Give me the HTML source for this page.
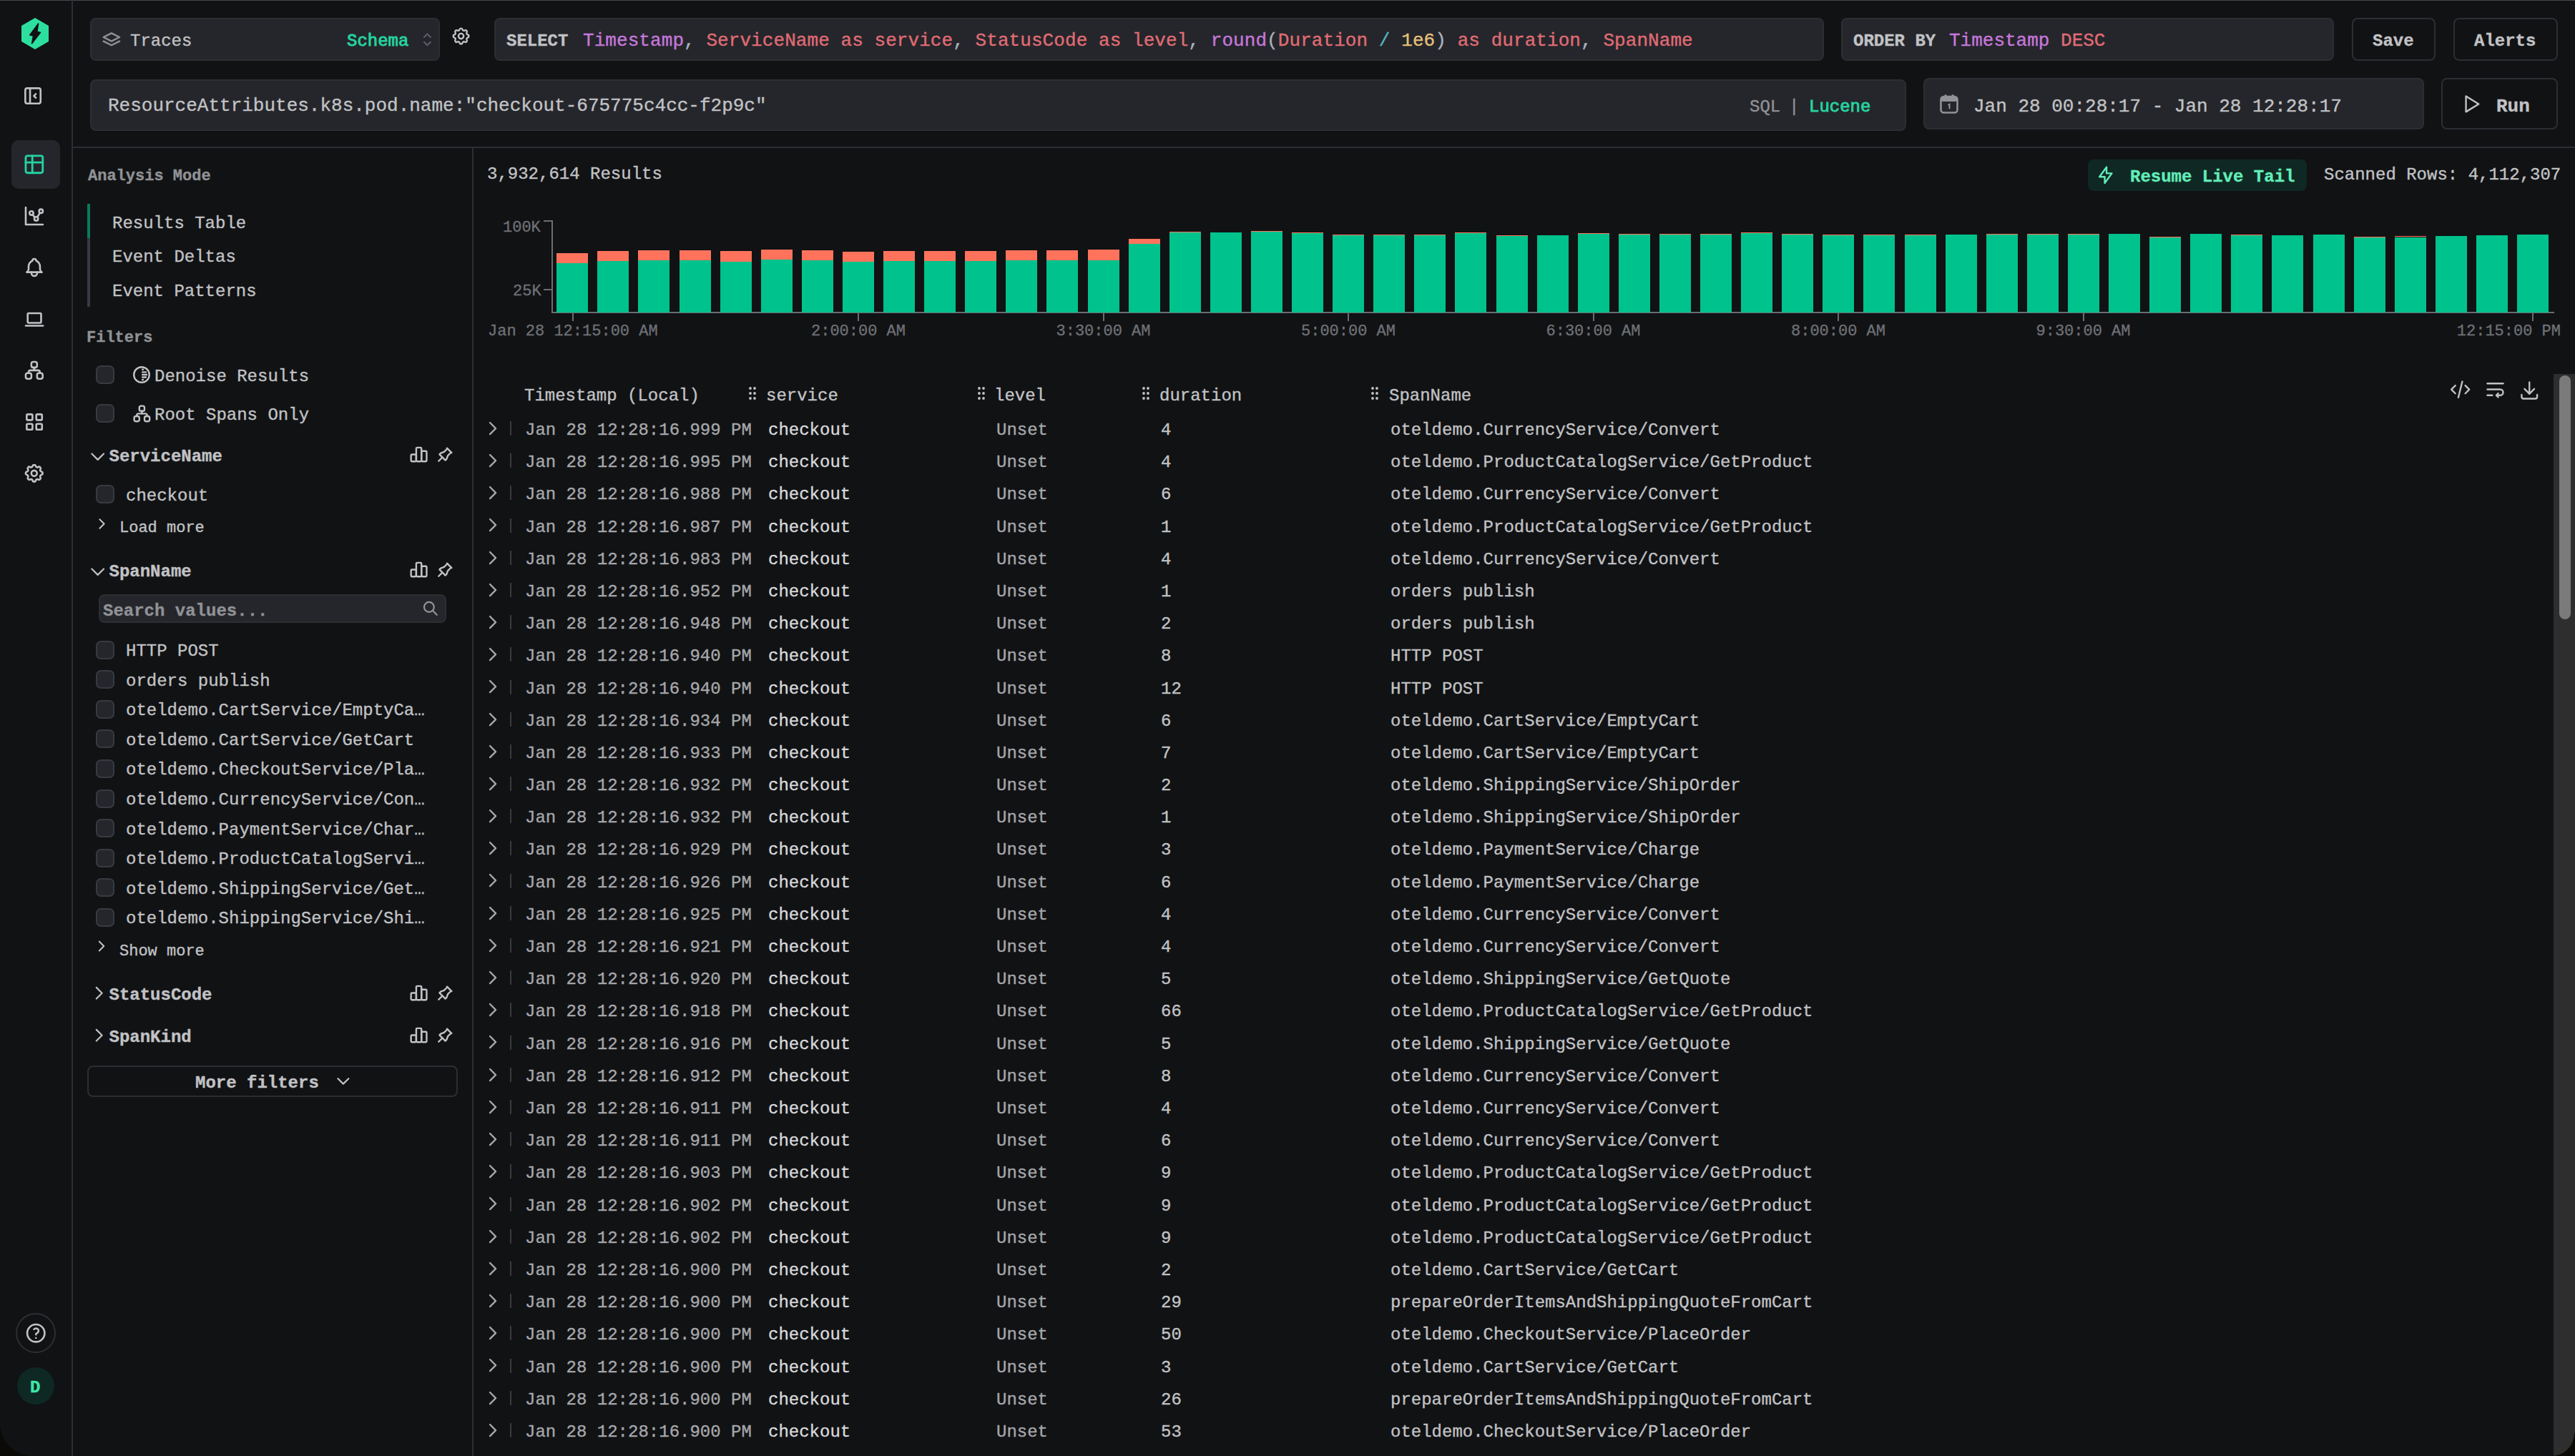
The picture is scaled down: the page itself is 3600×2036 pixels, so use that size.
<!DOCTYPE html>
<html><head><meta charset="utf-8"><title>HyperDX Search</title>
<style>
html,body{margin:0;padding:0;}
body{width:3600px;height:2036px;overflow:hidden;background:#111214;position:relative;font-family:'Liberation Mono', monospace;}
.t{position:absolute;white-space:pre;font-family:'Liberation Mono', monospace;-webkit-text-stroke:0.35px currentColor;}
.r{position:absolute;}
</style></head><body>
<div class="r" style="left:0px;top:0px;width:3600px;height:1px;background:#46464c;border-radius:0px;"></div><div class="r" style="left:100px;top:0px;width:2px;height:2036px;background:#2c2e33;border-radius:0px;"></div><svg class="r" style="left:29px;top:25px" width="40" height="44" viewBox="0 0 40 44"><path d="M20 0 L39 11 L39 33 L20 44 L1 33 L1 11 Z" fill="#2ddf9f"/><path d="M24.6 8 L12.8 24 L17.6 25 L15.6 35.8 L27.4 20.4 L22.8 19.2 Z" fill="#111214" stroke="#111214" stroke-width="1.6" stroke-linejoin="round"/></svg><svg class="r" style="left:29.95px;top:117.95px;" width="32.1" height="32.1" viewBox="0 0 24 24" fill="none" stroke="#c1c2c5" stroke-width="1.944" stroke-linecap="round" stroke-linejoin="round"><path d="M4 6a2 2 0 0 1 2 -2h12a2 2 0 0 1 2 2v12a2 2 0 0 1 -2 2h-12a2 2 0 0 1 -2 -2z"/><path d="M9 4v16"/><path d="M15 10l-2 2l2 2"/></svg><div class="r" style="left:16px;top:196px;width:68px;height:68px;background:#25262b;border-radius:10px;"></div><svg class="r" style="left:32.18px;top:213.98px;" width="31.73" height="31.73" viewBox="0 0 24 24" fill="none" stroke="#25d3a0" stroke-width="2.118" stroke-linecap="round" stroke-linejoin="round"><path d="M3 5a2 2 0 0 1 2 -2h14a2 2 0 0 1 2 2v14a2 2 0 0 1 -2 2h-14a2 2 0 0 1 -2 -2v-14z"/><path d="M3 10h18"/><path d="M10 3v18"/></svg><svg class="r" style="left:32.08px;top:286.03px;" width="31.93" height="31.93" viewBox="0 0 24 24" fill="none" stroke="#c1c2c5" stroke-width="1.954" stroke-linecap="round" stroke-linejoin="round"><path d="M3 3v18h18"/><circle cx="9" cy="9" r="2"/><circle cx="19" cy="7" r="2"/><circle cx="14" cy="15" r="2"/><path d="M10.16 10.62l2.34 2.88"/><path d="M15.088 13.328l2.837 -4.586"/></svg><svg class="r" style="left:32.04px;top:357.84px;" width="31.92" height="31.92" viewBox="0 0 24 24" fill="none" stroke="#c1c2c5" stroke-width="1.955" stroke-linecap="round" stroke-linejoin="round"><path d="M10 5a2 2 0 1 1 4 0a7 7 0 0 1 4 6v3a4 4 0 0 0 2 3h-16a4 4 0 0 0 2 -3v-3a7 7 0 0 1 4 -6"/><path d="M9 17v1a3 3 0 0 0 6 0v-1"/></svg><svg class="r" style="left:31.96px;top:430.14px;" width="32.18" height="32.18" viewBox="0 0 24 24" fill="none" stroke="#c1c2c5" stroke-width="1.939" stroke-linecap="round" stroke-linejoin="round"><path d="M3 19h18"/><path d="M5 7a1 1 0 0 1 1 -1h12a1 1 0 0 1 1 1v8a1 1 0 0 1 -1 1h-12a1 1 0 0 1 -1 -1z"/></svg><svg class="r" style="left:32.42px;top:502.07px;" width="31.67" height="31.67" viewBox="0 0 24 24" fill="none" stroke="#c1c2c5" stroke-width="1.971" stroke-linecap="round" stroke-linejoin="round"><path d="M3 17a2 2 0 0 1 2 -2h2a2 2 0 0 1 2 2v2a2 2 0 0 1 -2 2h-2a2 2 0 0 1 -2 -2z"/><path d="M15 17a2 2 0 0 1 2 -2h2a2 2 0 0 1 2 2v2a2 2 0 0 1 -2 2h-2a2 2 0 0 1 -2 -2z"/><path d="M9 5a2 2 0 0 1 2 -2h2a2 2 0 0 1 2 2v2a2 2 0 0 1 -2 2h-2a2 2 0 0 1 -2 -2z"/><path d="M6 15v-1a2 2 0 0 1 2 -2h8a2 2 0 0 1 2 2v1"/><path d="M12 9v3"/></svg><svg class="r" style="left:31.95px;top:573.95px;" width="32.1" height="32.1" viewBox="0 0 24 24" fill="none" stroke="#c1c2c5" stroke-width="1.944" stroke-linecap="round" stroke-linejoin="round"><path d="M4 5a1 1 0 0 1 1 -1h4a1 1 0 0 1 1 1v4a1 1 0 0 1 -1 1h-4a1 1 0 0 1 -1 -1z"/><path d="M14 5a1 1 0 0 1 1 -1h4a1 1 0 0 1 1 1v4a1 1 0 0 1 -1 1h-4a1 1 0 0 1 -1 -1z"/><path d="M4 15a1 1 0 0 1 1 -1h4a1 1 0 0 1 1 1v4a1 1 0 0 1 -1 1h-4a1 1 0 0 1 -1 -1z"/><path d="M14 15a1 1 0 0 1 1 -1h4a1 1 0 0 1 1 1v4a1 1 0 0 1 -1 1h-4a1 1 0 0 1 -1 -1z"/></svg><svg class="r" style="left:32.22px;top:646.22px;" width="31.55" height="31.55" viewBox="0 0 24 24" fill="none" stroke="#c1c2c5" stroke-width="1.978" stroke-linecap="round" stroke-linejoin="round"><path d="M10.325 4.317c.426 -1.756 2.924 -1.756 3.35 0a1.724 1.724 0 0 0 2.573 1.066c1.543 -.94 3.31 .826 2.37 2.37a1.724 1.724 0 0 0 1.065 2.572c1.756 .426 1.756 2.924 0 3.35a1.724 1.724 0 0 0 -1.066 2.573c.94 1.543 -.826 3.31 -2.37 2.37a1.724 1.724 0 0 0 -2.572 1.065c-.426 1.756 -2.924 1.756 -3.35 0a1.724 1.724 0 0 0 -2.573 -1.066c-1.543 .94 -3.31 -.826 -2.37 -2.37a1.724 1.724 0 0 0 -1.065 -2.572c-1.756 -.426 -1.756 -2.924 0 -3.35a1.724 1.724 0 0 0 1.066 -2.573c-.94 -1.543 .826 -3.31 2.37 -2.37c1 .608 2.296 .07 2.572 -1.065z"/><circle cx="12" cy="12" r="3"/></svg><div class="r" style="left:22px;top:1836px;width:56px;height:56px;background:none;border:2px solid #2c2e33;box-sizing:border-box;border-radius:28px;"></div><svg class="r" style="left:33.92px;top:1847.77px;" width="32.47" height="32.47" viewBox="0 0 24 24" fill="none" stroke="#c1c2c5" stroke-width="1.922" stroke-linecap="round" stroke-linejoin="round"><circle cx="12" cy="12" r="9"/><path d="M12 17v.01"/><path d="M12 13.5a1.5 1.5 0 0 1 1 -1.5a2.6 2.6 0 1 0 -3 -4"/></svg><div class="r" style="left:24px;top:1912px;width:52px;height:52px;background:#0e2823;border-radius:26px;"></div><div class="t" style="left:42px;top:1929px;font-size:24px;line-height:24px;color:#3ee6ab;font-weight:700;">D</div><div class="r" style="left:102px;top:205px;width:3498px;height:2px;background:#2c2e33;border-radius:0px;"></div><div class="r" style="left:126px;top:25px;width:489px;height:60px;background:#25262b;border:2px solid #2c2e33;box-sizing:border-box;border-radius:8px;"></div><svg class="r" style="left:139.11px;top:37.91px;" width="33.68" height="33.68" viewBox="0 0 24 24" fill="none" stroke="#909296" stroke-width="1.71" stroke-linecap="round" stroke-linejoin="round"><path d="M12 6l-8 4l8 4l8 -4l-8 -4"/><path d="M4 14l8 4l8 -4"/></svg><div class="t" style="left:182px;top:46px;font-size:24px;line-height:24px;color:#c1c2c5;">Traces</div><div class="t" style="left:485px;top:46px;font-size:24px;line-height:24px;color:#25d3a0;-webkit-text-stroke:0.9px currentColor;">Schema</div><svg class="r" style="left:584.11px;top:41.86px;" width="26.79" height="26.79" viewBox="0 0 24 24" fill="none" stroke="#5c5f66" stroke-width="1.792" stroke-linecap="round" stroke-linejoin="round"><path d="M8 9l4 -4l4 4"/><path d="M16 15l-4 4l-4 -4"/></svg><svg class="r" style="left:630.44px;top:36.44px;" width="29.13" height="29.13" viewBox="0 0 24 24" fill="none" stroke="#c1c2c5" stroke-width="1.978" stroke-linecap="round" stroke-linejoin="round"><path d="M10.325 4.317c.426 -1.756 2.924 -1.756 3.35 0a1.724 1.724 0 0 0 2.573 1.066c1.543 -.94 3.31 .826 2.37 2.37a1.724 1.724 0 0 0 1.065 2.572c1.756 .426 1.756 2.924 0 3.35a1.724 1.724 0 0 0 -1.066 2.573c.94 1.543 -.826 3.31 -2.37 2.37a1.724 1.724 0 0 0 -2.572 1.065c-.426 1.756 -2.924 1.756 -3.35 0a1.724 1.724 0 0 0 -2.573 -1.066c-1.543 .94 -3.31 -.826 -2.37 -2.37a1.724 1.724 0 0 0 -1.065 -2.572c-1.756 -.426 -1.756 -2.924 0 -3.35a1.724 1.724 0 0 0 1.066 -2.573c-.94 -1.543 .826 -3.31 2.37 -2.37c1 .608 2.296 .07 2.572 -1.065z"/><circle cx="12" cy="12" r="3"/></svg><div class="r" style="left:691px;top:25px;width:1859px;height:60px;background:#25262b;border:2px solid #2c2e33;box-sizing:border-box;border-radius:8px;"></div><div class="t" style="left:708px;top:46px;font-size:24px;line-height:24px;color:#c1c2c5;font-weight:700;">SELECT</div><div class="t" style="left:815px;top:44px;font-size:26px;line-height:26px;color:#c1c2c5;letter-spacing:0.07px;"><span style="color:#c678dd">Timestamp</span><span style="color:#abb2bf">, </span><span style="color:#e06c75">ServiceName as service</span><span style="color:#abb2bf">, </span><span style="color:#e06c75">StatusCode as level</span><span style="color:#abb2bf">, </span><span style="color:#c678dd">round</span><span style="color:#abb2bf">(</span><span style="color:#e06c75">Duration </span><span style="color:#56b6c2">/</span> <span style="color:#e5c07b">1e6</span><span style="color:#abb2bf">)</span> <span style="color:#e06c75">as duration</span><span style="color:#abb2bf">, </span><span style="color:#e06c75">SpanName</span></div><div class="r" style="left:2574px;top:25px;width:689px;height:60px;background:#25262b;border:2px solid #2c2e33;box-sizing:border-box;border-radius:8px;"></div><div class="t" style="left:2591px;top:46px;font-size:24px;line-height:24px;color:#c1c2c5;font-weight:700;">ORDER BY</div><div class="t" style="left:2725px;top:44px;font-size:26px;line-height:26px;color:#c1c2c5;"><span style="color:#c678dd">Timestamp</span> <span style="color:#e06c75">DESC</span></div><div class="r" style="left:3288px;top:25px;width:117px;height:60px;background:#111214;border:2px solid #2c2e33;box-sizing:border-box;border-radius:8px;"></div><div class="t" style="left:3317px;top:46px;font-size:24px;line-height:24px;color:#c1c2c5;font-weight:700;">Save</div><div class="r" style="left:3430px;top:25px;width:146px;height:60px;background:#111214;border:2px solid #2c2e33;box-sizing:border-box;border-radius:8px;"></div><div class="t" style="left:3459px;top:46px;font-size:24px;line-height:24px;color:#c1c2c5;font-weight:700;">Alerts</div><div class="r" style="left:126px;top:111px;width:2539px;height:72px;background:#25262b;border:2px solid #2c2e33;box-sizing:border-box;border-radius:8px;"></div><div class="t" style="left:151px;top:135px;font-size:26px;line-height:26px;color:#c1c2c5;">ResourceAttributes.k8s.pod.name:"checkout-675775c4cc-f2p9c"</div><div class="t" style="left:2446px;top:138px;font-size:24px;line-height:24px;color:#909296;">SQL</div><div class="t" style="left:2501px;top:138px;font-size:24px;line-height:24px;color:#909296;">|</div><div class="t" style="left:2529px;top:138px;font-size:24px;line-height:24px;color:#25d3a0;-webkit-text-stroke:0.9px currentColor;">Lucene</div><div class="r" style="left:2689px;top:109px;width:700px;height:72px;background:#25262b;border:2px solid #2c2e33;box-sizing:border-box;border-radius:8px;"></div><svg class="r" style="left:2712px;top:131px" width="26" height="28" viewBox="0 0 26 28"><rect x="1.5" y="4" width="23" height="22.5" rx="4" fill="none" stroke="#909296" stroke-width="2.6"/><rect x="1.5" y="4" width="23" height="7" rx="3" fill="#909296"/><rect x="6.5" y="1" width="3" height="5" rx="1.5" fill="#909296"/><rect x="16.5" y="1" width="3" height="5" rx="1.5" fill="#909296"/><path d="M11.5 16 l2 -1.2 v6.5" fill="none" stroke="#909296" stroke-width="2"/></svg><div class="t" style="left:2759px;top:136px;font-size:26px;line-height:26px;color:#c1c2c5;">Jan 28 00:28:17 - Jan 28 12:28:17</div><div class="r" style="left:3413px;top:109px;width:163px;height:72px;background:#111214;border:2px solid #2c2e33;box-sizing:border-box;border-radius:8px;"></div><svg class="r" style="left:3438.03px;top:128.63px;" width="32.84" height="32.84" viewBox="0 0 24 24" fill="none" stroke="#c1c2c5" stroke-width="1.754" stroke-linecap="round" stroke-linejoin="round"><path d="M7 4v16l13 -8z"/></svg><div class="t" style="left:3490px;top:136px;font-size:26px;line-height:26px;color:#c1c2c5;font-weight:700;">Run</div><div class="r" style="left:660px;top:207px;width:2px;height:1829px;background:#2c2e33;border-radius:0px;"></div><div class="t" style="left:123px;top:236px;font-size:22px;line-height:22px;color:#909296;font-weight:700;">Analysis Mode</div><div class="r" style="left:122px;top:285px;width:4px;height:48px;background:#0c7a5a;border-radius:0px;"></div><div class="r" style="left:122px;top:333px;width:4px;height:96px;background:#373a40;border-radius:0px;"></div><div class="t" style="left:157px;top:301px;font-size:24px;line-height:24px;color:#c1c2c5;">Results Table</div><div class="t" style="left:157px;top:348px;font-size:24px;line-height:24px;color:#c1c2c5;">Event Deltas</div><div class="t" style="left:157px;top:396px;font-size:24px;line-height:24px;color:#c1c2c5;">Event Patterns</div><div class="t" style="left:121px;top:462px;font-size:22px;line-height:22px;color:#909296;font-weight:700;">Filters</div><div class="r" style="left:134px;top:511px;width:26px;height:26px;background:#25262b;border:2px solid #373a40;box-sizing:border-box;border-radius:7px;"></div><svg class="r" style="left:185px;top:511px" width="26" height="26" viewBox="0 0 26 26"><circle cx="13" cy="13" r="10.8" fill="none" stroke="#c1c2c5" stroke-width="2.4"/><path d="M14.2 5.8h0.8 M14.2 9.4h4.8 M14.2 13h5.9 M14.2 16.5h4.8 M14.2 20h0.8" stroke="#c1c2c5" stroke-width="2.4" stroke-linecap="round"/></svg><div class="t" style="left:216px;top:515px;font-size:24px;line-height:24px;color:#c1c2c5;">Denoise Results</div><div class="r" style="left:134px;top:565px;width:26px;height:26px;background:#25262b;border:2px solid #373a40;box-sizing:border-box;border-radius:7px;"></div><svg class="r" style="left:183.6px;top:563.6px;" width="28.8" height="28.8" viewBox="0 0 24 24" fill="none" stroke="#c1c2c5" stroke-width="2.0" stroke-linecap="round" stroke-linejoin="round"><path d="M3 17a2 2 0 0 1 2 -2h2a2 2 0 0 1 2 2v2a2 2 0 0 1 -2 2h-2a2 2 0 0 1 -2 -2z"/><path d="M15 17a2 2 0 0 1 2 -2h2a2 2 0 0 1 2 2v2a2 2 0 0 1 -2 2h-2a2 2 0 0 1 -2 -2z"/><path d="M9 5a2 2 0 0 1 2 -2h2a2 2 0 0 1 2 2v2a2 2 0 0 1 -2 2h-2a2 2 0 0 1 -2 -2z"/><path d="M6 15v-1a2 2 0 0 1 2 -2h8a2 2 0 0 1 2 2v1"/><path d="M12 9v3"/></svg><div class="t" style="left:216px;top:569px;font-size:24px;line-height:24px;color:#c1c2c5;">Root Spans Only</div><svg class="r" style="left:120.3px;top:621.8px;" width="33.4" height="33.4" viewBox="0 0 24 24" fill="none" stroke="#c1c2c5" stroke-width="1.581" stroke-linecap="round" stroke-linejoin="round"><path d="M6 9l6 6l6 -6"/></svg><div class="t" style="left:152.5px;top:627px;font-size:24px;line-height:24px;color:#c1c2c5;font-weight:700;">ServiceName</div><svg class="r" style="left:571.45px;top:621.45px;" width="29.1" height="29.1" viewBox="0 0 24 24" fill="none" stroke="#c1c2c5" stroke-width="1.979" stroke-linecap="round" stroke-linejoin="round"><path d="M3 13a1 1 0 0 1 1 -1h4a1 1 0 0 1 1 1v6a1 1 0 0 1 -1 1h-4a1 1 0 0 1 -1 -1z"/><path d="M15 9a1 1 0 0 1 1 -1h4a1 1 0 0 1 1 1v10a1 1 0 0 1 -1 1h-4a1 1 0 0 1 -1 -1z"/><path d="M9 5a1 1 0 0 1 1 -1h4a1 1 0 0 1 1 1v14a1 1 0 0 1 -1 1h-4a1 1 0 0 1 -1 -1z"/></svg><svg class="r" style="left:607.7px;top:621.78px;" width="28.03" height="28.03" viewBox="0 0 24 24" fill="none" stroke="#c1c2c5" stroke-width="2.055" stroke-linecap="round" stroke-linejoin="round"><path d="M15 4.5l-4 4l-4 1.5l-1.5 1.5l7 7l1.5 -1.5l1.5 -4l4 -4"/><path d="M9 15l-4.5 4.5"/><path d="M14.5 4l5.5 5.5"/></svg><div class="r" style="left:134px;top:678px;width:26px;height:26px;background:#25262b;border:2px solid #373a40;box-sizing:border-box;border-radius:7px;"></div><div class="t" style="left:176px;top:682px;font-size:24px;line-height:24px;color:#c1c2c5;">checkout</div><svg class="r" style="left:130.0px;top:720.0px;" width="25.0" height="25.0" viewBox="0 0 24 24" fill="none" stroke="#c1c2c5" stroke-width="1.92" stroke-linecap="round" stroke-linejoin="round"><path d="M9 6l6 6l-6 6"/></svg><div class="t" style="left:167px;top:728px;font-size:22px;line-height:22px;color:#c1c2c5;">Load more</div><svg class="r" style="left:120.3px;top:782.8px;" width="33.4" height="33.4" viewBox="0 0 24 24" fill="none" stroke="#c1c2c5" stroke-width="1.581" stroke-linecap="round" stroke-linejoin="round"><path d="M6 9l6 6l6 -6"/></svg><div class="t" style="left:152.5px;top:788px;font-size:24px;line-height:24px;color:#c1c2c5;font-weight:700;">SpanName</div><svg class="r" style="left:571.45px;top:782.45px;" width="29.1" height="29.1" viewBox="0 0 24 24" fill="none" stroke="#c1c2c5" stroke-width="1.979" stroke-linecap="round" stroke-linejoin="round"><path d="M3 13a1 1 0 0 1 1 -1h4a1 1 0 0 1 1 1v6a1 1 0 0 1 -1 1h-4a1 1 0 0 1 -1 -1z"/><path d="M15 9a1 1 0 0 1 1 -1h4a1 1 0 0 1 1 1v10a1 1 0 0 1 -1 1h-4a1 1 0 0 1 -1 -1z"/><path d="M9 5a1 1 0 0 1 1 -1h4a1 1 0 0 1 1 1v14a1 1 0 0 1 -1 1h-4a1 1 0 0 1 -1 -1z"/></svg><svg class="r" style="left:607.7px;top:782.78px;" width="28.03" height="28.03" viewBox="0 0 24 24" fill="none" stroke="#c1c2c5" stroke-width="2.055" stroke-linecap="round" stroke-linejoin="round"><path d="M15 4.5l-4 4l-4 1.5l-1.5 1.5l7 7l1.5 -1.5l1.5 -4l4 -4"/><path d="M9 15l-4.5 4.5"/><path d="M14.5 4l5.5 5.5"/></svg><div class="r" style="left:138px;top:831px;width:486px;height:40px;background:#25262b;border:2px solid #2c2e33;box-sizing:border-box;border-radius:8px;"></div><div class="t" style="left:144px;top:843px;font-size:24px;line-height:24px;color:#909296;font-weight:700;">Search values...</div><svg class="r" style="left:590.13px;top:839.13px;" width="23.73" height="23.73" viewBox="0 0 24 24" fill="none" stroke="#909296" stroke-width="2.225" stroke-linecap="round" stroke-linejoin="round"><circle cx="10" cy="10" r="7"/><path d="M21 21l-6 -6"/></svg><div class="r" style="left:134px;top:895.6px;width:26px;height:26px;background:#25262b;border:2px solid #373a40;box-sizing:border-box;border-radius:7px;"></div><div class="t" style="left:176px;top:899.0px;font-size:24px;line-height:24px;color:#c1c2c5;">HTTP POST</div><div class="r" style="left:134px;top:937.2px;width:26px;height:26px;background:#25262b;border:2px solid #373a40;box-sizing:border-box;border-radius:7px;"></div><div class="t" style="left:176px;top:940.6px;font-size:24px;line-height:24px;color:#c1c2c5;">orders publish</div><div class="r" style="left:134px;top:978.8px;width:26px;height:26px;background:#25262b;border:2px solid #373a40;box-sizing:border-box;border-radius:7px;"></div><div class="t" style="left:176px;top:982.2px;font-size:24px;line-height:24px;color:#c1c2c5;">oteldemo.CartService/EmptyCa…</div><div class="r" style="left:134px;top:1020.4px;width:26px;height:26px;background:#25262b;border:2px solid #373a40;box-sizing:border-box;border-radius:7px;"></div><div class="t" style="left:176px;top:1023.8px;font-size:24px;line-height:24px;color:#c1c2c5;">oteldemo.CartService/GetCart</div><div class="r" style="left:134px;top:1062.0px;width:26px;height:26px;background:#25262b;border:2px solid #373a40;box-sizing:border-box;border-radius:7px;"></div><div class="t" style="left:176px;top:1065.4px;font-size:24px;line-height:24px;color:#c1c2c5;">oteldemo.CheckoutService/Pla…</div><div class="r" style="left:134px;top:1103.6px;width:26px;height:26px;background:#25262b;border:2px solid #373a40;box-sizing:border-box;border-radius:7px;"></div><div class="t" style="left:176px;top:1107.0px;font-size:24px;line-height:24px;color:#c1c2c5;">oteldemo.CurrencyService/Con…</div><div class="r" style="left:134px;top:1145.2px;width:26px;height:26px;background:#25262b;border:2px solid #373a40;box-sizing:border-box;border-radius:7px;"></div><div class="t" style="left:176px;top:1148.6px;font-size:24px;line-height:24px;color:#c1c2c5;">oteldemo.PaymentService/Char…</div><div class="r" style="left:134px;top:1186.8px;width:26px;height:26px;background:#25262b;border:2px solid #373a40;box-sizing:border-box;border-radius:7px;"></div><div class="t" style="left:176px;top:1190.2px;font-size:24px;line-height:24px;color:#c1c2c5;">oteldemo.ProductCatalogServi…</div><div class="r" style="left:134px;top:1228.4px;width:26px;height:26px;background:#25262b;border:2px solid #373a40;box-sizing:border-box;border-radius:7px;"></div><div class="t" style="left:176px;top:1231.8px;font-size:24px;line-height:24px;color:#c1c2c5;">oteldemo.ShippingService/Get…</div><div class="r" style="left:134px;top:1270.0px;width:26px;height:26px;background:#25262b;border:2px solid #373a40;box-sizing:border-box;border-radius:7px;"></div><div class="t" style="left:176px;top:1273.4px;font-size:24px;line-height:24px;color:#c1c2c5;">oteldemo.ShippingService/Shi…</div><svg class="r" style="left:128.5px;top:1310.0px;" width="26.0" height="26.0" viewBox="0 0 24 24" fill="none" stroke="#c1c2c5" stroke-width="1.846" stroke-linecap="round" stroke-linejoin="round"><path d="M9 6l6 6l-6 6"/></svg><div class="t" style="left:167px;top:1320px;font-size:22px;line-height:22px;color:#c1c2c5;">Show more</div><svg class="r" style="left:123.3px;top:1373.3px;" width="31.4" height="31.4" viewBox="0 0 24 24" fill="none" stroke="#c1c2c5" stroke-width="1.682" stroke-linecap="round" stroke-linejoin="round"><path d="M9 6l6 6l-6 6"/></svg><div class="t" style="left:152.5px;top:1380px;font-size:24px;line-height:24px;color:#c1c2c5;font-weight:700;">StatusCode</div><svg class="r" style="left:571.45px;top:1374.45px;" width="29.1" height="29.1" viewBox="0 0 24 24" fill="none" stroke="#c1c2c5" stroke-width="1.979" stroke-linecap="round" stroke-linejoin="round"><path d="M3 13a1 1 0 0 1 1 -1h4a1 1 0 0 1 1 1v6a1 1 0 0 1 -1 1h-4a1 1 0 0 1 -1 -1z"/><path d="M15 9a1 1 0 0 1 1 -1h4a1 1 0 0 1 1 1v10a1 1 0 0 1 -1 1h-4a1 1 0 0 1 -1 -1z"/><path d="M9 5a1 1 0 0 1 1 -1h4a1 1 0 0 1 1 1v14a1 1 0 0 1 -1 1h-4a1 1 0 0 1 -1 -1z"/></svg><svg class="r" style="left:607.7px;top:1374.78px;" width="28.03" height="28.03" viewBox="0 0 24 24" fill="none" stroke="#c1c2c5" stroke-width="2.055" stroke-linecap="round" stroke-linejoin="round"><path d="M15 4.5l-4 4l-4 1.5l-1.5 1.5l7 7l1.5 -1.5l1.5 -4l4 -4"/><path d="M9 15l-4.5 4.5"/><path d="M14.5 4l5.5 5.5"/></svg><svg class="r" style="left:123.3px;top:1432.3px;" width="31.4" height="31.4" viewBox="0 0 24 24" fill="none" stroke="#c1c2c5" stroke-width="1.682" stroke-linecap="round" stroke-linejoin="round"><path d="M9 6l6 6l-6 6"/></svg><div class="t" style="left:152.5px;top:1439px;font-size:24px;line-height:24px;color:#c1c2c5;font-weight:700;">SpanKind</div><svg class="r" style="left:571.45px;top:1433.45px;" width="29.1" height="29.1" viewBox="0 0 24 24" fill="none" stroke="#c1c2c5" stroke-width="1.979" stroke-linecap="round" stroke-linejoin="round"><path d="M3 13a1 1 0 0 1 1 -1h4a1 1 0 0 1 1 1v6a1 1 0 0 1 -1 1h-4a1 1 0 0 1 -1 -1z"/><path d="M15 9a1 1 0 0 1 1 -1h4a1 1 0 0 1 1 1v10a1 1 0 0 1 -1 1h-4a1 1 0 0 1 -1 -1z"/><path d="M9 5a1 1 0 0 1 1 -1h4a1 1 0 0 1 1 1v14a1 1 0 0 1 -1 1h-4a1 1 0 0 1 -1 -1z"/></svg><svg class="r" style="left:607.7px;top:1433.78px;" width="28.03" height="28.03" viewBox="0 0 24 24" fill="none" stroke="#c1c2c5" stroke-width="2.055" stroke-linecap="round" stroke-linejoin="round"><path d="M15 4.5l-4 4l-4 1.5l-1.5 1.5l7 7l1.5 -1.5l1.5 -4l4 -4"/><path d="M9 15l-4.5 4.5"/><path d="M14.5 4l5.5 5.5"/></svg><div class="r" style="left:122px;top:1490px;width:518px;height:44px;background:none;border:2px solid #2c2e33;box-sizing:border-box;border-radius:8px;"></div><div class="t" style="left:273px;top:1503px;font-size:24px;line-height:24px;color:#c1c2c5;font-weight:700;">More filters</div><svg class="r" style="left:464.9px;top:1497.1px;" width="29.8" height="29.8" viewBox="0 0 24 24" fill="none" stroke="#c1c2c5" stroke-width="1.772" stroke-linecap="round" stroke-linejoin="round"><path d="M6 9l6 6l6 -6"/></svg><div class="t" style="left:681px;top:232px;font-size:24px;line-height:24px;color:#c1c2c5;">3,932,614 Results</div><div class="r" style="left:2919px;top:223px;width:306px;height:44px;background:#0f2823;border-radius:8px;"></div><svg class="r" style="left:2928.93px;top:229.98px;" width="29.65" height="29.65" viewBox="0 0 24 24" fill="none" stroke="#62edba" stroke-width="1.943" stroke-linecap="round" stroke-linejoin="round"><path d="M13 3v7h6l-8 11v-7h-6l8 -11"/></svg><div class="t" style="left:2978px;top:236px;font-size:24px;line-height:24px;color:#62edba;font-weight:700;">Resume Live Tail</div><div class="t" style="left:3249px;top:233px;font-size:24px;line-height:24px;color:#c1c2c5;">Scanned Rows: 4,112,307</div><div class="t" style="left:703px;top:308px;font-size:22px;line-height:22px;color:#6e7075;">100K</div><div class="t" style="left:717px;top:397px;font-size:22px;line-height:22px;color:#6e7075;">25K</div><div class="r" style="left:771px;top:308px;width:2px;height:130px;background:#6b6d72;border-radius:0px;"></div><div class="r" style="left:760px;top:307.5px;width:12px;height:2px;background:#6b6d72;border-radius:0px;"></div><div class="r" style="left:760px;top:403.5px;width:12px;height:2px;background:#6b6d72;border-radius:0px;"></div><div class="r" style="left:771px;top:436px;width:2800px;height:2px;background:#6b6d72;border-radius:0px;"></div><div class="r" style="left:778.2px;top:353.8px;width:44px;height:14.2px;background:#ff735c;border-radius:0px;"></div><div class="r" style="left:778.2px;top:368px;width:44px;height:69px;background:#00c28c;border-radius:0px;"></div><div class="r" style="left:835.3px;top:350.8px;width:44px;height:14.2px;background:#ff735c;border-radius:0px;"></div><div class="r" style="left:835.3px;top:365px;width:44px;height:72px;background:#00c28c;border-radius:0px;"></div><div class="r" style="left:892.4px;top:349.7px;width:44px;height:14.2px;background:#ff735c;border-radius:0px;"></div><div class="r" style="left:892.4px;top:363.9px;width:44px;height:73.1px;background:#00c28c;border-radius:0px;"></div><div class="r" style="left:949.5px;top:349.7px;width:44px;height:14.2px;background:#ff735c;border-radius:0px;"></div><div class="r" style="left:949.5px;top:363.9px;width:44px;height:73.1px;background:#00c28c;border-radius:0px;"></div><div class="r" style="left:1006.6px;top:350.8px;width:44px;height:15.0px;background:#ff735c;border-radius:0px;"></div><div class="r" style="left:1006.6px;top:365.8px;width:44px;height:71.2px;background:#00c28c;border-radius:0px;"></div><div class="r" style="left:1063.7px;top:348.9px;width:44px;height:14.1px;background:#ff735c;border-radius:0px;"></div><div class="r" style="left:1063.7px;top:363px;width:44px;height:74px;background:#00c28c;border-radius:0px;"></div><div class="r" style="left:1120.8px;top:349.7px;width:44px;height:14.2px;background:#ff735c;border-radius:0px;"></div><div class="r" style="left:1120.8px;top:363.9px;width:44px;height:73.1px;background:#00c28c;border-radius:0px;"></div><div class="r" style="left:1177.9px;top:351.6px;width:44px;height:14.2px;background:#ff735c;border-radius:0px;"></div><div class="r" style="left:1177.9px;top:365.8px;width:44px;height:71.2px;background:#00c28c;border-radius:0px;"></div><div class="r" style="left:1235.0px;top:350.8px;width:44px;height:14.2px;background:#ff735c;border-radius:0px;"></div><div class="r" style="left:1235.0px;top:365px;width:44px;height:72px;background:#00c28c;border-radius:0px;"></div><div class="r" style="left:1292.1px;top:350.8px;width:44px;height:14.2px;background:#ff735c;border-radius:0px;"></div><div class="r" style="left:1292.1px;top:365px;width:44px;height:72px;background:#00c28c;border-radius:0px;"></div><div class="r" style="left:1349.2px;top:350.8px;width:44px;height:14.2px;background:#ff735c;border-radius:0px;"></div><div class="r" style="left:1349.2px;top:365px;width:44px;height:72px;background:#00c28c;border-radius:0px;"></div><div class="r" style="left:1406.3px;top:349.7px;width:44px;height:14.2px;background:#ff735c;border-radius:0px;"></div><div class="r" style="left:1406.3px;top:363.9px;width:44px;height:73.1px;background:#00c28c;border-radius:0px;"></div><div class="r" style="left:1463.4px;top:349.7px;width:44px;height:14.2px;background:#ff735c;border-radius:0px;"></div><div class="r" style="left:1463.4px;top:363.9px;width:44px;height:73.1px;background:#00c28c;border-radius:0px;"></div><div class="r" style="left:1520.5px;top:348.9px;width:44px;height:15.0px;background:#ff735c;border-radius:0px;"></div><div class="r" style="left:1520.5px;top:363.9px;width:44px;height:73.1px;background:#00c28c;border-radius:0px;"></div><div class="r" style="left:1577.6px;top:334px;width:44px;height:6.8px;background:#ff735c;border-radius:0px;"></div><div class="r" style="left:1577.6px;top:340.8px;width:44px;height:96.2px;background:#00c28c;border-radius:0px;"></div><div class="r" style="left:1634.7px;top:323.9px;width:44px;height:1.1px;background:#ff735c;border-radius:0px;"></div><div class="r" style="left:1634.7px;top:325px;width:44px;height:112px;background:#00c28c;border-radius:0px;"></div><div class="r" style="left:1691.8px;top:325px;width:44px;height:112px;background:#00c28c;border-radius:0px;"></div><div class="r" style="left:1748.9px;top:322.8px;width:44px;height:1.1px;background:#ff735c;border-radius:0px;"></div><div class="r" style="left:1748.9px;top:323.9px;width:44px;height:113.1px;background:#00c28c;border-radius:0px;"></div><div class="r" style="left:1806.0px;top:325px;width:44px;height:0.8px;background:#ff735c;border-radius:0px;"></div><div class="r" style="left:1806.0px;top:325.8px;width:44px;height:111.2px;background:#00c28c;border-radius:0px;"></div><div class="r" style="left:1863.1px;top:327.7px;width:44px;height:0.8px;background:#ff735c;border-radius:0px;"></div><div class="r" style="left:1863.1px;top:328.5px;width:44px;height:108.5px;background:#00c28c;border-radius:0px;"></div><div class="r" style="left:1920.2px;top:327.7px;width:44px;height:0.8px;background:#ff735c;border-radius:0px;"></div><div class="r" style="left:1920.2px;top:328.5px;width:44px;height:108.5px;background:#00c28c;border-radius:0px;"></div><div class="r" style="left:1977.3px;top:327.7px;width:44px;height:0.8px;background:#ff735c;border-radius:0px;"></div><div class="r" style="left:1977.3px;top:328.5px;width:44px;height:108.5px;background:#00c28c;border-radius:0px;"></div><div class="r" style="left:2034.4px;top:325px;width:44px;height:0.8px;background:#ff735c;border-radius:0px;"></div><div class="r" style="left:2034.4px;top:325.8px;width:44px;height:111.2px;background:#00c28c;border-radius:0px;"></div><div class="r" style="left:2091.5px;top:328.5px;width:44px;height:1.1px;background:#ff735c;border-radius:0px;"></div><div class="r" style="left:2091.5px;top:329.6px;width:44px;height:107.4px;background:#00c28c;border-radius:0px;"></div><div class="r" style="left:2148.6px;top:328.5px;width:44px;height:0.9px;background:#ff735c;border-radius:0px;"></div><div class="r" style="left:2148.6px;top:329.4px;width:44px;height:107.6px;background:#00c28c;border-radius:0px;"></div><div class="r" style="left:2205.7px;top:325.8px;width:44px;height:0.8px;background:#ff735c;border-radius:0px;"></div><div class="r" style="left:2205.7px;top:326.6px;width:44px;height:110.4px;background:#00c28c;border-radius:0px;"></div><div class="r" style="left:2262.8px;top:326.6px;width:44px;height:1.1px;background:#ff735c;border-radius:0px;"></div><div class="r" style="left:2262.8px;top:327.7px;width:44px;height:109.3px;background:#00c28c;border-radius:0px;"></div><div class="r" style="left:2319.9px;top:326.6px;width:44px;height:1.1px;background:#ff735c;border-radius:0px;"></div><div class="r" style="left:2319.9px;top:327.7px;width:44px;height:109.3px;background:#00c28c;border-radius:0px;"></div><div class="r" style="left:2377.0px;top:326.6px;width:44px;height:1.1px;background:#ff735c;border-radius:0px;"></div><div class="r" style="left:2377.0px;top:327.7px;width:44px;height:109.3px;background:#00c28c;border-radius:0px;"></div><div class="r" style="left:2434.1px;top:325px;width:44px;height:0.8px;background:#ff735c;border-radius:0px;"></div><div class="r" style="left:2434.1px;top:325.8px;width:44px;height:111.2px;background:#00c28c;border-radius:0px;"></div><div class="r" style="left:2491.2px;top:326.6px;width:44px;height:1.1px;background:#ff735c;border-radius:0px;"></div><div class="r" style="left:2491.2px;top:327.7px;width:44px;height:109.3px;background:#00c28c;border-radius:0px;"></div><div class="r" style="left:2548.3px;top:327.7px;width:44px;height:0.8px;background:#ff735c;border-radius:0px;"></div><div class="r" style="left:2548.3px;top:328.5px;width:44px;height:108.5px;background:#00c28c;border-radius:0px;"></div><div class="r" style="left:2605.4px;top:327.7px;width:44px;height:0.8px;background:#ff735c;border-radius:0px;"></div><div class="r" style="left:2605.4px;top:328.5px;width:44px;height:108.5px;background:#00c28c;border-radius:0px;"></div><div class="r" style="left:2662.5px;top:327.7px;width:44px;height:0.8px;background:#ff735c;border-radius:0px;"></div><div class="r" style="left:2662.5px;top:328.5px;width:44px;height:108.5px;background:#00c28c;border-radius:0px;"></div><div class="r" style="left:2719.6px;top:327.9px;width:44px;height:109.1px;background:#00c28c;border-radius:0px;"></div><div class="r" style="left:2776.7px;top:326.6px;width:44px;height:1.1px;background:#ff735c;border-radius:0px;"></div><div class="r" style="left:2776.7px;top:327.7px;width:44px;height:109.3px;background:#00c28c;border-radius:0px;"></div><div class="r" style="left:2833.8px;top:326.9px;width:44px;height:0.8px;background:#ff735c;border-radius:0px;"></div><div class="r" style="left:2833.8px;top:327.7px;width:44px;height:109.3px;background:#00c28c;border-radius:0px;"></div><div class="r" style="left:2890.9px;top:326.9px;width:44px;height:0.8px;background:#ff735c;border-radius:0px;"></div><div class="r" style="left:2890.9px;top:327.7px;width:44px;height:109.3px;background:#00c28c;border-radius:0px;"></div><div class="r" style="left:2948.0px;top:326.5px;width:44px;height:110.5px;background:#00c28c;border-radius:0px;"></div><div class="r" style="left:3005.1px;top:331px;width:44px;height:0.8px;background:#ff735c;border-radius:0px;"></div><div class="r" style="left:3005.1px;top:331.8px;width:44px;height:105.2px;background:#00c28c;border-radius:0px;"></div><div class="r" style="left:3062.2px;top:326.5px;width:44px;height:110.5px;background:#00c28c;border-radius:0px;"></div><div class="r" style="left:3119.3px;top:327.9px;width:44px;height:0.8px;background:#ff735c;border-radius:0px;"></div><div class="r" style="left:3119.3px;top:328.7px;width:44px;height:108.3px;background:#00c28c;border-radius:0px;"></div><div class="r" style="left:3176.4px;top:328.6px;width:44px;height:0.8px;background:#ff735c;border-radius:0px;"></div><div class="r" style="left:3176.4px;top:329.4px;width:44px;height:107.6px;background:#00c28c;border-radius:0px;"></div><div class="r" style="left:3233.5px;top:327.6px;width:44px;height:0.8px;background:#ff735c;border-radius:0px;"></div><div class="r" style="left:3233.5px;top:328.4px;width:44px;height:108.6px;background:#00c28c;border-radius:0px;"></div><div class="r" style="left:3290.6px;top:330.7px;width:44px;height:0.8px;background:#ff735c;border-radius:0px;"></div><div class="r" style="left:3290.6px;top:331.5px;width:44px;height:105.5px;background:#00c28c;border-radius:0px;"></div><div class="r" style="left:3347.7px;top:329.7px;width:44px;height:1.8px;background:#ff735c;border-radius:0px;"></div><div class="r" style="left:3347.7px;top:331.5px;width:44px;height:105.5px;background:#00c28c;border-radius:0px;"></div><div class="r" style="left:3404.8px;top:329.7px;width:44px;height:107.3px;background:#00c28c;border-radius:0px;"></div><div class="r" style="left:3461.9px;top:328.6px;width:44px;height:108.4px;background:#00c28c;border-radius:0px;"></div><div class="r" style="left:3519.0px;top:327.6px;width:44px;height:0.8px;background:#ff735c;border-radius:0px;"></div><div class="r" style="left:3519.0px;top:328.4px;width:44px;height:108.6px;background:#00c28c;border-radius:0px;"></div><div class="r" style="left:799.5px;top:438px;width:2px;height:11px;background:#6b6d72;border-radius:0px;"></div><div class="t" style="left:682px;top:453px;font-size:22px;line-height:22px;color:#6e7075;">Jan 28 12:15:00 AM</div><div class="r" style="left:1199px;top:438px;width:2px;height:11px;background:#6b6d72;border-radius:0px;"></div><div class="t" style="left:1134.0px;top:453px;font-size:22px;line-height:22px;color:#6e7075;">2:00:00 AM</div><div class="r" style="left:1541.5px;top:438px;width:2px;height:11px;background:#6b6d72;border-radius:0px;"></div><div class="t" style="left:1476.5px;top:453px;font-size:22px;line-height:22px;color:#6e7075;">3:30:00 AM</div><div class="r" style="left:1884px;top:438px;width:2px;height:11px;background:#6b6d72;border-radius:0px;"></div><div class="t" style="left:1819.0px;top:453px;font-size:22px;line-height:22px;color:#6e7075;">5:00:00 AM</div><div class="r" style="left:2226.5px;top:438px;width:2px;height:11px;background:#6b6d72;border-radius:0px;"></div><div class="t" style="left:2161.5px;top:453px;font-size:22px;line-height:22px;color:#6e7075;">6:30:00 AM</div><div class="r" style="left:2569px;top:438px;width:2px;height:11px;background:#6b6d72;border-radius:0px;"></div><div class="t" style="left:2504.0px;top:453px;font-size:22px;line-height:22px;color:#6e7075;">8:00:00 AM</div><div class="r" style="left:2911.5px;top:438px;width:2px;height:11px;background:#6b6d72;border-radius:0px;"></div><div class="t" style="left:2846.5px;top:453px;font-size:22px;line-height:22px;color:#6e7075;">9:30:00 AM</div><div class="r" style="left:3540px;top:438px;width:2px;height:11px;background:#6b6d72;border-radius:0px;"></div><div class="t" style="left:3434.8px;top:453px;font-size:22px;line-height:22px;color:#6e7075;">12:15:00 PM</div><div class="t" style="left:733px;top:542px;font-size:24px;line-height:24px;color:#c1c2c5;">Timestamp (Local)</div><svg class="r" style="left:1047px;top:541px" width="10" height="18" viewBox="0 0 10 18" fill="#c1c2c5"><circle cx="2" cy="2" r="1.9"/><circle cx="2" cy="9" r="1.9"/><circle cx="2" cy="16" r="1.9"/><circle cx="8" cy="2" r="1.9"/><circle cx="8" cy="9" r="1.9"/><circle cx="8" cy="16" r="1.9"/></svg><div class="t" style="left:1071px;top:542px;font-size:24px;line-height:24px;color:#c1c2c5;">service</div><svg class="r" style="left:1367px;top:541px" width="10" height="18" viewBox="0 0 10 18" fill="#c1c2c5"><circle cx="2" cy="2" r="1.9"/><circle cx="2" cy="9" r="1.9"/><circle cx="2" cy="16" r="1.9"/><circle cx="8" cy="2" r="1.9"/><circle cx="8" cy="9" r="1.9"/><circle cx="8" cy="16" r="1.9"/></svg><div class="t" style="left:1390px;top:542px;font-size:24px;line-height:24px;color:#c1c2c5;">level</div><svg class="r" style="left:1597px;top:541px" width="10" height="18" viewBox="0 0 10 18" fill="#c1c2c5"><circle cx="2" cy="2" r="1.9"/><circle cx="2" cy="9" r="1.9"/><circle cx="2" cy="16" r="1.9"/><circle cx="8" cy="2" r="1.9"/><circle cx="8" cy="9" r="1.9"/><circle cx="8" cy="16" r="1.9"/></svg><div class="t" style="left:1621px;top:542px;font-size:24px;line-height:24px;color:#c1c2c5;">duration</div><svg class="r" style="left:1917px;top:541px" width="10" height="18" viewBox="0 0 10 18" fill="#c1c2c5"><circle cx="2" cy="2" r="1.9"/><circle cx="2" cy="9" r="1.9"/><circle cx="2" cy="16" r="1.9"/><circle cx="8" cy="2" r="1.9"/><circle cx="8" cy="9" r="1.9"/><circle cx="8" cy="16" r="1.9"/></svg><div class="t" style="left:1942px;top:542px;font-size:24px;line-height:24px;color:#c1c2c5;">SpanName</div><svg class="r" style="left:3422.82px;top:527.83px;" width="33.35" height="33.35" viewBox="0 0 24 24" fill="none" stroke="#c1c2c5" stroke-width="1.727" stroke-linecap="round" stroke-linejoin="round"><path d="M7 8l-4 4l4 4"/><path d="M17 8l4 4l-4 4"/><path d="M14 4l-4 16"/></svg><svg class="r" style="left:3471.5px;top:528.12px;" width="33.0" height="33.0" viewBox="0 0 24 24" fill="none" stroke="#c1c2c5" stroke-width="1.745" stroke-linecap="round" stroke-linejoin="round"><path d="M4 6h16"/><path d="M4 18h5"/><path d="M4 12h13a3 3 0 0 1 0 6h-4l2 -2m0 4l-2 -2"/></svg><svg class="r" style="left:3519.75px;top:529.32px;" width="32.51" height="32.51" viewBox="0 0 24 24" fill="none" stroke="#c1c2c5" stroke-width="1.772" stroke-linecap="round" stroke-linejoin="round"><path d="M4 17v2a2 2 0 0 0 2 2h12a2 2 0 0 0 2 -2v-2"/><path d="M7 11l5 5l5 -5"/><path d="M12 4v12"/></svg><div class="r" style="left:3570px;top:523px;width:30px;height:1513px;background:#2e2e2e;border-radius:0px;"></div><div class="r" style="left:3578px;top:525px;width:16px;height:341px;background:#7a7a7a;border-radius:8px;"></div><svg class="r" style="left:672.8px;top:582.8px;" width="32.1" height="32.1" viewBox="0 0 24 24" fill="none" stroke="#a6a7ab" stroke-width="1.794" stroke-linecap="round" stroke-linejoin="round"><path d="M9 6l6 6l-6 6"/></svg><div class="r" style="left:713px;top:589.0px;width:2px;height:20px;background:#373a40;border-radius:0px;"></div><div class="t" style="left:734px;top:590.0px;font-size:24px;line-height:24px;color:#a6a7ab;">Jan 28 12:28:16.999 PM</div><div class="t" style="left:1074px;top:590.0px;font-size:24px;line-height:24px;color:#d8d9dc;">checkout</div><div class="t" style="left:1393px;top:590.0px;font-size:24px;line-height:24px;color:#a6a7ab;">Unset</div><div class="t" style="left:1623px;top:590.0px;font-size:24px;line-height:24px;color:#c1c2c5;">4</div><div class="t" style="left:1944px;top:590.0px;font-size:24px;line-height:24px;color:#c1c2c5;">oteldemo.CurrencyService/Convert</div><svg class="r" style="left:672.8px;top:627.99px;" width="32.1" height="32.1" viewBox="0 0 24 24" fill="none" stroke="#a6a7ab" stroke-width="1.794" stroke-linecap="round" stroke-linejoin="round"><path d="M9 6l6 6l-6 6"/></svg><div class="r" style="left:713px;top:634.19px;width:2px;height:20px;background:#373a40;border-radius:0px;"></div><div class="t" style="left:734px;top:635.19px;font-size:24px;line-height:24px;color:#a6a7ab;">Jan 28 12:28:16.995 PM</div><div class="t" style="left:1074px;top:635.19px;font-size:24px;line-height:24px;color:#d8d9dc;">checkout</div><div class="t" style="left:1393px;top:635.19px;font-size:24px;line-height:24px;color:#a6a7ab;">Unset</div><div class="t" style="left:1623px;top:635.19px;font-size:24px;line-height:24px;color:#c1c2c5;">4</div><div class="t" style="left:1944px;top:635.19px;font-size:24px;line-height:24px;color:#c1c2c5;">oteldemo.ProductCatalogService/GetProduct</div><svg class="r" style="left:672.8px;top:673.18px;" width="32.1" height="32.1" viewBox="0 0 24 24" fill="none" stroke="#a6a7ab" stroke-width="1.794" stroke-linecap="round" stroke-linejoin="round"><path d="M9 6l6 6l-6 6"/></svg><div class="r" style="left:713px;top:679.38px;width:2px;height:20px;background:#373a40;border-radius:0px;"></div><div class="t" style="left:734px;top:680.38px;font-size:24px;line-height:24px;color:#a6a7ab;">Jan 28 12:28:16.988 PM</div><div class="t" style="left:1074px;top:680.38px;font-size:24px;line-height:24px;color:#d8d9dc;">checkout</div><div class="t" style="left:1393px;top:680.38px;font-size:24px;line-height:24px;color:#a6a7ab;">Unset</div><div class="t" style="left:1623px;top:680.38px;font-size:24px;line-height:24px;color:#c1c2c5;">6</div><div class="t" style="left:1944px;top:680.38px;font-size:24px;line-height:24px;color:#c1c2c5;">oteldemo.CurrencyService/Convert</div><svg class="r" style="left:672.8px;top:718.37px;" width="32.1" height="32.1" viewBox="0 0 24 24" fill="none" stroke="#a6a7ab" stroke-width="1.794" stroke-linecap="round" stroke-linejoin="round"><path d="M9 6l6 6l-6 6"/></svg><div class="r" style="left:713px;top:724.57px;width:2px;height:20px;background:#373a40;border-radius:0px;"></div><div class="t" style="left:734px;top:725.57px;font-size:24px;line-height:24px;color:#a6a7ab;">Jan 28 12:28:16.987 PM</div><div class="t" style="left:1074px;top:725.57px;font-size:24px;line-height:24px;color:#d8d9dc;">checkout</div><div class="t" style="left:1393px;top:725.57px;font-size:24px;line-height:24px;color:#a6a7ab;">Unset</div><div class="t" style="left:1623px;top:725.57px;font-size:24px;line-height:24px;color:#c1c2c5;">1</div><div class="t" style="left:1944px;top:725.57px;font-size:24px;line-height:24px;color:#c1c2c5;">oteldemo.ProductCatalogService/GetProduct</div><svg class="r" style="left:672.8px;top:763.56px;" width="32.1" height="32.1" viewBox="0 0 24 24" fill="none" stroke="#a6a7ab" stroke-width="1.794" stroke-linecap="round" stroke-linejoin="round"><path d="M9 6l6 6l-6 6"/></svg><div class="r" style="left:713px;top:769.76px;width:2px;height:20px;background:#373a40;border-radius:0px;"></div><div class="t" style="left:734px;top:770.76px;font-size:24px;line-height:24px;color:#a6a7ab;">Jan 28 12:28:16.983 PM</div><div class="t" style="left:1074px;top:770.76px;font-size:24px;line-height:24px;color:#d8d9dc;">checkout</div><div class="t" style="left:1393px;top:770.76px;font-size:24px;line-height:24px;color:#a6a7ab;">Unset</div><div class="t" style="left:1623px;top:770.76px;font-size:24px;line-height:24px;color:#c1c2c5;">4</div><div class="t" style="left:1944px;top:770.76px;font-size:24px;line-height:24px;color:#c1c2c5;">oteldemo.CurrencyService/Convert</div><svg class="r" style="left:672.8px;top:808.75px;" width="32.1" height="32.1" viewBox="0 0 24 24" fill="none" stroke="#a6a7ab" stroke-width="1.794" stroke-linecap="round" stroke-linejoin="round"><path d="M9 6l6 6l-6 6"/></svg><div class="r" style="left:713px;top:814.95px;width:2px;height:20px;background:#373a40;border-radius:0px;"></div><div class="t" style="left:734px;top:815.95px;font-size:24px;line-height:24px;color:#a6a7ab;">Jan 28 12:28:16.952 PM</div><div class="t" style="left:1074px;top:815.95px;font-size:24px;line-height:24px;color:#d8d9dc;">checkout</div><div class="t" style="left:1393px;top:815.95px;font-size:24px;line-height:24px;color:#a6a7ab;">Unset</div><div class="t" style="left:1623px;top:815.95px;font-size:24px;line-height:24px;color:#c1c2c5;">1</div><div class="t" style="left:1944px;top:815.95px;font-size:24px;line-height:24px;color:#c1c2c5;">orders publish</div><svg class="r" style="left:672.8px;top:853.94px;" width="32.1" height="32.1" viewBox="0 0 24 24" fill="none" stroke="#a6a7ab" stroke-width="1.794" stroke-linecap="round" stroke-linejoin="round"><path d="M9 6l6 6l-6 6"/></svg><div class="r" style="left:713px;top:860.14px;width:2px;height:20px;background:#373a40;border-radius:0px;"></div><div class="t" style="left:734px;top:861.14px;font-size:24px;line-height:24px;color:#a6a7ab;">Jan 28 12:28:16.948 PM</div><div class="t" style="left:1074px;top:861.14px;font-size:24px;line-height:24px;color:#d8d9dc;">checkout</div><div class="t" style="left:1393px;top:861.14px;font-size:24px;line-height:24px;color:#a6a7ab;">Unset</div><div class="t" style="left:1623px;top:861.14px;font-size:24px;line-height:24px;color:#c1c2c5;">2</div><div class="t" style="left:1944px;top:861.14px;font-size:24px;line-height:24px;color:#c1c2c5;">orders publish</div><svg class="r" style="left:672.8px;top:899.13px;" width="32.1" height="32.1" viewBox="0 0 24 24" fill="none" stroke="#a6a7ab" stroke-width="1.794" stroke-linecap="round" stroke-linejoin="round"><path d="M9 6l6 6l-6 6"/></svg><div class="r" style="left:713px;top:905.33px;width:2px;height:20px;background:#373a40;border-radius:0px;"></div><div class="t" style="left:734px;top:906.33px;font-size:24px;line-height:24px;color:#a6a7ab;">Jan 28 12:28:16.940 PM</div><div class="t" style="left:1074px;top:906.33px;font-size:24px;line-height:24px;color:#d8d9dc;">checkout</div><div class="t" style="left:1393px;top:906.33px;font-size:24px;line-height:24px;color:#a6a7ab;">Unset</div><div class="t" style="left:1623px;top:906.33px;font-size:24px;line-height:24px;color:#c1c2c5;">8</div><div class="t" style="left:1944px;top:906.33px;font-size:24px;line-height:24px;color:#c1c2c5;">HTTP POST</div><svg class="r" style="left:672.8px;top:944.32px;" width="32.1" height="32.1" viewBox="0 0 24 24" fill="none" stroke="#a6a7ab" stroke-width="1.794" stroke-linecap="round" stroke-linejoin="round"><path d="M9 6l6 6l-6 6"/></svg><div class="r" style="left:713px;top:950.52px;width:2px;height:20px;background:#373a40;border-radius:0px;"></div><div class="t" style="left:734px;top:951.52px;font-size:24px;line-height:24px;color:#a6a7ab;">Jan 28 12:28:16.940 PM</div><div class="t" style="left:1074px;top:951.52px;font-size:24px;line-height:24px;color:#d8d9dc;">checkout</div><div class="t" style="left:1393px;top:951.52px;font-size:24px;line-height:24px;color:#a6a7ab;">Unset</div><div class="t" style="left:1623px;top:951.52px;font-size:24px;line-height:24px;color:#c1c2c5;">12</div><div class="t" style="left:1944px;top:951.52px;font-size:24px;line-height:24px;color:#c1c2c5;">HTTP POST</div><svg class="r" style="left:672.8px;top:989.51px;" width="32.1" height="32.1" viewBox="0 0 24 24" fill="none" stroke="#a6a7ab" stroke-width="1.794" stroke-linecap="round" stroke-linejoin="round"><path d="M9 6l6 6l-6 6"/></svg><div class="r" style="left:713px;top:995.71px;width:2px;height:20px;background:#373a40;border-radius:0px;"></div><div class="t" style="left:734px;top:996.71px;font-size:24px;line-height:24px;color:#a6a7ab;">Jan 28 12:28:16.934 PM</div><div class="t" style="left:1074px;top:996.71px;font-size:24px;line-height:24px;color:#d8d9dc;">checkout</div><div class="t" style="left:1393px;top:996.71px;font-size:24px;line-height:24px;color:#a6a7ab;">Unset</div><div class="t" style="left:1623px;top:996.71px;font-size:24px;line-height:24px;color:#c1c2c5;">6</div><div class="t" style="left:1944px;top:996.71px;font-size:24px;line-height:24px;color:#c1c2c5;">oteldemo.CartService/EmptyCart</div><svg class="r" style="left:672.8px;top:1034.7px;" width="32.1" height="32.1" viewBox="0 0 24 24" fill="none" stroke="#a6a7ab" stroke-width="1.794" stroke-linecap="round" stroke-linejoin="round"><path d="M9 6l6 6l-6 6"/></svg><div class="r" style="left:713px;top:1040.9px;width:2px;height:20px;background:#373a40;border-radius:0px;"></div><div class="t" style="left:734px;top:1041.9px;font-size:24px;line-height:24px;color:#a6a7ab;">Jan 28 12:28:16.933 PM</div><div class="t" style="left:1074px;top:1041.9px;font-size:24px;line-height:24px;color:#d8d9dc;">checkout</div><div class="t" style="left:1393px;top:1041.9px;font-size:24px;line-height:24px;color:#a6a7ab;">Unset</div><div class="t" style="left:1623px;top:1041.9px;font-size:24px;line-height:24px;color:#c1c2c5;">7</div><div class="t" style="left:1944px;top:1041.9px;font-size:24px;line-height:24px;color:#c1c2c5;">oteldemo.CartService/EmptyCart</div><svg class="r" style="left:672.8px;top:1079.89px;" width="32.1" height="32.1" viewBox="0 0 24 24" fill="none" stroke="#a6a7ab" stroke-width="1.794" stroke-linecap="round" stroke-linejoin="round"><path d="M9 6l6 6l-6 6"/></svg><div class="r" style="left:713px;top:1086.09px;width:2px;height:20px;background:#373a40;border-radius:0px;"></div><div class="t" style="left:734px;top:1087.09px;font-size:24px;line-height:24px;color:#a6a7ab;">Jan 28 12:28:16.932 PM</div><div class="t" style="left:1074px;top:1087.09px;font-size:24px;line-height:24px;color:#d8d9dc;">checkout</div><div class="t" style="left:1393px;top:1087.09px;font-size:24px;line-height:24px;color:#a6a7ab;">Unset</div><div class="t" style="left:1623px;top:1087.09px;font-size:24px;line-height:24px;color:#c1c2c5;">2</div><div class="t" style="left:1944px;top:1087.09px;font-size:24px;line-height:24px;color:#c1c2c5;">oteldemo.ShippingService/ShipOrder</div><svg class="r" style="left:672.8px;top:1125.08px;" width="32.1" height="32.1" viewBox="0 0 24 24" fill="none" stroke="#a6a7ab" stroke-width="1.794" stroke-linecap="round" stroke-linejoin="round"><path d="M9 6l6 6l-6 6"/></svg><div class="r" style="left:713px;top:1131.28px;width:2px;height:20px;background:#373a40;border-radius:0px;"></div><div class="t" style="left:734px;top:1132.28px;font-size:24px;line-height:24px;color:#a6a7ab;">Jan 28 12:28:16.932 PM</div><div class="t" style="left:1074px;top:1132.28px;font-size:24px;line-height:24px;color:#d8d9dc;">checkout</div><div class="t" style="left:1393px;top:1132.28px;font-size:24px;line-height:24px;color:#a6a7ab;">Unset</div><div class="t" style="left:1623px;top:1132.28px;font-size:24px;line-height:24px;color:#c1c2c5;">1</div><div class="t" style="left:1944px;top:1132.28px;font-size:24px;line-height:24px;color:#c1c2c5;">oteldemo.ShippingService/ShipOrder</div><svg class="r" style="left:672.8px;top:1170.27px;" width="32.1" height="32.1" viewBox="0 0 24 24" fill="none" stroke="#a6a7ab" stroke-width="1.794" stroke-linecap="round" stroke-linejoin="round"><path d="M9 6l6 6l-6 6"/></svg><div class="r" style="left:713px;top:1176.47px;width:2px;height:20px;background:#373a40;border-radius:0px;"></div><div class="t" style="left:734px;top:1177.47px;font-size:24px;line-height:24px;color:#a6a7ab;">Jan 28 12:28:16.929 PM</div><div class="t" style="left:1074px;top:1177.47px;font-size:24px;line-height:24px;color:#d8d9dc;">checkout</div><div class="t" style="left:1393px;top:1177.47px;font-size:24px;line-height:24px;color:#a6a7ab;">Unset</div><div class="t" style="left:1623px;top:1177.47px;font-size:24px;line-height:24px;color:#c1c2c5;">3</div><div class="t" style="left:1944px;top:1177.47px;font-size:24px;line-height:24px;color:#c1c2c5;">oteldemo.PaymentService/Charge</div><svg class="r" style="left:672.8px;top:1215.46px;" width="32.1" height="32.1" viewBox="0 0 24 24" fill="none" stroke="#a6a7ab" stroke-width="1.794" stroke-linecap="round" stroke-linejoin="round"><path d="M9 6l6 6l-6 6"/></svg><div class="r" style="left:713px;top:1221.66px;width:2px;height:20px;background:#373a40;border-radius:0px;"></div><div class="t" style="left:734px;top:1222.66px;font-size:24px;line-height:24px;color:#a6a7ab;">Jan 28 12:28:16.926 PM</div><div class="t" style="left:1074px;top:1222.66px;font-size:24px;line-height:24px;color:#d8d9dc;">checkout</div><div class="t" style="left:1393px;top:1222.66px;font-size:24px;line-height:24px;color:#a6a7ab;">Unset</div><div class="t" style="left:1623px;top:1222.66px;font-size:24px;line-height:24px;color:#c1c2c5;">6</div><div class="t" style="left:1944px;top:1222.66px;font-size:24px;line-height:24px;color:#c1c2c5;">oteldemo.PaymentService/Charge</div><svg class="r" style="left:672.8px;top:1260.65px;" width="32.1" height="32.1" viewBox="0 0 24 24" fill="none" stroke="#a6a7ab" stroke-width="1.794" stroke-linecap="round" stroke-linejoin="round"><path d="M9 6l6 6l-6 6"/></svg><div class="r" style="left:713px;top:1266.85px;width:2px;height:20px;background:#373a40;border-radius:0px;"></div><div class="t" style="left:734px;top:1267.85px;font-size:24px;line-height:24px;color:#a6a7ab;">Jan 28 12:28:16.925 PM</div><div class="t" style="left:1074px;top:1267.85px;font-size:24px;line-height:24px;color:#d8d9dc;">checkout</div><div class="t" style="left:1393px;top:1267.85px;font-size:24px;line-height:24px;color:#a6a7ab;">Unset</div><div class="t" style="left:1623px;top:1267.85px;font-size:24px;line-height:24px;color:#c1c2c5;">4</div><div class="t" style="left:1944px;top:1267.85px;font-size:24px;line-height:24px;color:#c1c2c5;">oteldemo.CurrencyService/Convert</div><svg class="r" style="left:672.8px;top:1305.84px;" width="32.1" height="32.1" viewBox="0 0 24 24" fill="none" stroke="#a6a7ab" stroke-width="1.794" stroke-linecap="round" stroke-linejoin="round"><path d="M9 6l6 6l-6 6"/></svg><div class="r" style="left:713px;top:1312.04px;width:2px;height:20px;background:#373a40;border-radius:0px;"></div><div class="t" style="left:734px;top:1313.04px;font-size:24px;line-height:24px;color:#a6a7ab;">Jan 28 12:28:16.921 PM</div><div class="t" style="left:1074px;top:1313.04px;font-size:24px;line-height:24px;color:#d8d9dc;">checkout</div><div class="t" style="left:1393px;top:1313.04px;font-size:24px;line-height:24px;color:#a6a7ab;">Unset</div><div class="t" style="left:1623px;top:1313.04px;font-size:24px;line-height:24px;color:#c1c2c5;">4</div><div class="t" style="left:1944px;top:1313.04px;font-size:24px;line-height:24px;color:#c1c2c5;">oteldemo.CurrencyService/Convert</div><svg class="r" style="left:672.8px;top:1351.03px;" width="32.1" height="32.1" viewBox="0 0 24 24" fill="none" stroke="#a6a7ab" stroke-width="1.794" stroke-linecap="round" stroke-linejoin="round"><path d="M9 6l6 6l-6 6"/></svg><div class="r" style="left:713px;top:1357.23px;width:2px;height:20px;background:#373a40;border-radius:0px;"></div><div class="t" style="left:734px;top:1358.23px;font-size:24px;line-height:24px;color:#a6a7ab;">Jan 28 12:28:16.920 PM</div><div class="t" style="left:1074px;top:1358.23px;font-size:24px;line-height:24px;color:#d8d9dc;">checkout</div><div class="t" style="left:1393px;top:1358.23px;font-size:24px;line-height:24px;color:#a6a7ab;">Unset</div><div class="t" style="left:1623px;top:1358.23px;font-size:24px;line-height:24px;color:#c1c2c5;">5</div><div class="t" style="left:1944px;top:1358.23px;font-size:24px;line-height:24px;color:#c1c2c5;">oteldemo.ShippingService/GetQuote</div><svg class="r" style="left:672.8px;top:1396.22px;" width="32.1" height="32.1" viewBox="0 0 24 24" fill="none" stroke="#a6a7ab" stroke-width="1.794" stroke-linecap="round" stroke-linejoin="round"><path d="M9 6l6 6l-6 6"/></svg><div class="r" style="left:713px;top:1402.42px;width:2px;height:20px;background:#373a40;border-radius:0px;"></div><div class="t" style="left:734px;top:1403.42px;font-size:24px;line-height:24px;color:#a6a7ab;">Jan 28 12:28:16.918 PM</div><div class="t" style="left:1074px;top:1403.42px;font-size:24px;line-height:24px;color:#d8d9dc;">checkout</div><div class="t" style="left:1393px;top:1403.42px;font-size:24px;line-height:24px;color:#a6a7ab;">Unset</div><div class="t" style="left:1623px;top:1403.42px;font-size:24px;line-height:24px;color:#c1c2c5;">66</div><div class="t" style="left:1944px;top:1403.42px;font-size:24px;line-height:24px;color:#c1c2c5;">oteldemo.ProductCatalogService/GetProduct</div><svg class="r" style="left:672.8px;top:1441.41px;" width="32.1" height="32.1" viewBox="0 0 24 24" fill="none" stroke="#a6a7ab" stroke-width="1.794" stroke-linecap="round" stroke-linejoin="round"><path d="M9 6l6 6l-6 6"/></svg><div class="r" style="left:713px;top:1447.61px;width:2px;height:20px;background:#373a40;border-radius:0px;"></div><div class="t" style="left:734px;top:1448.61px;font-size:24px;line-height:24px;color:#a6a7ab;">Jan 28 12:28:16.916 PM</div><div class="t" style="left:1074px;top:1448.61px;font-size:24px;line-height:24px;color:#d8d9dc;">checkout</div><div class="t" style="left:1393px;top:1448.61px;font-size:24px;line-height:24px;color:#a6a7ab;">Unset</div><div class="t" style="left:1623px;top:1448.61px;font-size:24px;line-height:24px;color:#c1c2c5;">5</div><div class="t" style="left:1944px;top:1448.61px;font-size:24px;line-height:24px;color:#c1c2c5;">oteldemo.ShippingService/GetQuote</div><svg class="r" style="left:672.8px;top:1486.6px;" width="32.1" height="32.1" viewBox="0 0 24 24" fill="none" stroke="#a6a7ab" stroke-width="1.794" stroke-linecap="round" stroke-linejoin="round"><path d="M9 6l6 6l-6 6"/></svg><div class="r" style="left:713px;top:1492.8px;width:2px;height:20px;background:#373a40;border-radius:0px;"></div><div class="t" style="left:734px;top:1493.8px;font-size:24px;line-height:24px;color:#a6a7ab;">Jan 28 12:28:16.912 PM</div><div class="t" style="left:1074px;top:1493.8px;font-size:24px;line-height:24px;color:#d8d9dc;">checkout</div><div class="t" style="left:1393px;top:1493.8px;font-size:24px;line-height:24px;color:#a6a7ab;">Unset</div><div class="t" style="left:1623px;top:1493.8px;font-size:24px;line-height:24px;color:#c1c2c5;">8</div><div class="t" style="left:1944px;top:1493.8px;font-size:24px;line-height:24px;color:#c1c2c5;">oteldemo.CurrencyService/Convert</div><svg class="r" style="left:672.8px;top:1531.79px;" width="32.1" height="32.1" viewBox="0 0 24 24" fill="none" stroke="#a6a7ab" stroke-width="1.794" stroke-linecap="round" stroke-linejoin="round"><path d="M9 6l6 6l-6 6"/></svg><div class="r" style="left:713px;top:1537.99px;width:2px;height:20px;background:#373a40;border-radius:0px;"></div><div class="t" style="left:734px;top:1538.99px;font-size:24px;line-height:24px;color:#a6a7ab;">Jan 28 12:28:16.911 PM</div><div class="t" style="left:1074px;top:1538.99px;font-size:24px;line-height:24px;color:#d8d9dc;">checkout</div><div class="t" style="left:1393px;top:1538.99px;font-size:24px;line-height:24px;color:#a6a7ab;">Unset</div><div class="t" style="left:1623px;top:1538.99px;font-size:24px;line-height:24px;color:#c1c2c5;">4</div><div class="t" style="left:1944px;top:1538.99px;font-size:24px;line-height:24px;color:#c1c2c5;">oteldemo.CurrencyService/Convert</div><svg class="r" style="left:672.8px;top:1576.98px;" width="32.1" height="32.1" viewBox="0 0 24 24" fill="none" stroke="#a6a7ab" stroke-width="1.794" stroke-linecap="round" stroke-linejoin="round"><path d="M9 6l6 6l-6 6"/></svg><div class="r" style="left:713px;top:1583.18px;width:2px;height:20px;background:#373a40;border-radius:0px;"></div><div class="t" style="left:734px;top:1584.18px;font-size:24px;line-height:24px;color:#a6a7ab;">Jan 28 12:28:16.911 PM</div><div class="t" style="left:1074px;top:1584.18px;font-size:24px;line-height:24px;color:#d8d9dc;">checkout</div><div class="t" style="left:1393px;top:1584.18px;font-size:24px;line-height:24px;color:#a6a7ab;">Unset</div><div class="t" style="left:1623px;top:1584.18px;font-size:24px;line-height:24px;color:#c1c2c5;">6</div><div class="t" style="left:1944px;top:1584.18px;font-size:24px;line-height:24px;color:#c1c2c5;">oteldemo.CurrencyService/Convert</div><svg class="r" style="left:672.8px;top:1622.17px;" width="32.1" height="32.1" viewBox="0 0 24 24" fill="none" stroke="#a6a7ab" stroke-width="1.794" stroke-linecap="round" stroke-linejoin="round"><path d="M9 6l6 6l-6 6"/></svg><div class="r" style="left:713px;top:1628.37px;width:2px;height:20px;background:#373a40;border-radius:0px;"></div><div class="t" style="left:734px;top:1629.37px;font-size:24px;line-height:24px;color:#a6a7ab;">Jan 28 12:28:16.903 PM</div><div class="t" style="left:1074px;top:1629.37px;font-size:24px;line-height:24px;color:#d8d9dc;">checkout</div><div class="t" style="left:1393px;top:1629.37px;font-size:24px;line-height:24px;color:#a6a7ab;">Unset</div><div class="t" style="left:1623px;top:1629.37px;font-size:24px;line-height:24px;color:#c1c2c5;">9</div><div class="t" style="left:1944px;top:1629.37px;font-size:24px;line-height:24px;color:#c1c2c5;">oteldemo.ProductCatalogService/GetProduct</div><svg class="r" style="left:672.8px;top:1667.36px;" width="32.1" height="32.1" viewBox="0 0 24 24" fill="none" stroke="#a6a7ab" stroke-width="1.794" stroke-linecap="round" stroke-linejoin="round"><path d="M9 6l6 6l-6 6"/></svg><div class="r" style="left:713px;top:1673.56px;width:2px;height:20px;background:#373a40;border-radius:0px;"></div><div class="t" style="left:734px;top:1674.56px;font-size:24px;line-height:24px;color:#a6a7ab;">Jan 28 12:28:16.902 PM</div><div class="t" style="left:1074px;top:1674.56px;font-size:24px;line-height:24px;color:#d8d9dc;">checkout</div><div class="t" style="left:1393px;top:1674.56px;font-size:24px;line-height:24px;color:#a6a7ab;">Unset</div><div class="t" style="left:1623px;top:1674.56px;font-size:24px;line-height:24px;color:#c1c2c5;">9</div><div class="t" style="left:1944px;top:1674.56px;font-size:24px;line-height:24px;color:#c1c2c5;">oteldemo.ProductCatalogService/GetProduct</div><svg class="r" style="left:672.8px;top:1712.55px;" width="32.1" height="32.1" viewBox="0 0 24 24" fill="none" stroke="#a6a7ab" stroke-width="1.794" stroke-linecap="round" stroke-linejoin="round"><path d="M9 6l6 6l-6 6"/></svg><div class="r" style="left:713px;top:1718.75px;width:2px;height:20px;background:#373a40;border-radius:0px;"></div><div class="t" style="left:734px;top:1719.75px;font-size:24px;line-height:24px;color:#a6a7ab;">Jan 28 12:28:16.902 PM</div><div class="t" style="left:1074px;top:1719.75px;font-size:24px;line-height:24px;color:#d8d9dc;">checkout</div><div class="t" style="left:1393px;top:1719.75px;font-size:24px;line-height:24px;color:#a6a7ab;">Unset</div><div class="t" style="left:1623px;top:1719.75px;font-size:24px;line-height:24px;color:#c1c2c5;">9</div><div class="t" style="left:1944px;top:1719.75px;font-size:24px;line-height:24px;color:#c1c2c5;">oteldemo.ProductCatalogService/GetProduct</div><svg class="r" style="left:672.8px;top:1757.74px;" width="32.1" height="32.1" viewBox="0 0 24 24" fill="none" stroke="#a6a7ab" stroke-width="1.794" stroke-linecap="round" stroke-linejoin="round"><path d="M9 6l6 6l-6 6"/></svg><div class="r" style="left:713px;top:1763.94px;width:2px;height:20px;background:#373a40;border-radius:0px;"></div><div class="t" style="left:734px;top:1764.94px;font-size:24px;line-height:24px;color:#a6a7ab;">Jan 28 12:28:16.900 PM</div><div class="t" style="left:1074px;top:1764.94px;font-size:24px;line-height:24px;color:#d8d9dc;">checkout</div><div class="t" style="left:1393px;top:1764.94px;font-size:24px;line-height:24px;color:#a6a7ab;">Unset</div><div class="t" style="left:1623px;top:1764.94px;font-size:24px;line-height:24px;color:#c1c2c5;">2</div><div class="t" style="left:1944px;top:1764.94px;font-size:24px;line-height:24px;color:#c1c2c5;">oteldemo.CartService/GetCart</div><svg class="r" style="left:672.8px;top:1802.93px;" width="32.1" height="32.1" viewBox="0 0 24 24" fill="none" stroke="#a6a7ab" stroke-width="1.794" stroke-linecap="round" stroke-linejoin="round"><path d="M9 6l6 6l-6 6"/></svg><div class="r" style="left:713px;top:1809.13px;width:2px;height:20px;background:#373a40;border-radius:0px;"></div><div class="t" style="left:734px;top:1810.13px;font-size:24px;line-height:24px;color:#a6a7ab;">Jan 28 12:28:16.900 PM</div><div class="t" style="left:1074px;top:1810.13px;font-size:24px;line-height:24px;color:#d8d9dc;">checkout</div><div class="t" style="left:1393px;top:1810.13px;font-size:24px;line-height:24px;color:#a6a7ab;">Unset</div><div class="t" style="left:1623px;top:1810.13px;font-size:24px;line-height:24px;color:#c1c2c5;">29</div><div class="t" style="left:1944px;top:1810.13px;font-size:24px;line-height:24px;color:#c1c2c5;">prepareOrderItemsAndShippingQuoteFromCart</div><svg class="r" style="left:672.8px;top:1848.12px;" width="32.1" height="32.1" viewBox="0 0 24 24" fill="none" stroke="#a6a7ab" stroke-width="1.794" stroke-linecap="round" stroke-linejoin="round"><path d="M9 6l6 6l-6 6"/></svg><div class="r" style="left:713px;top:1854.32px;width:2px;height:20px;background:#373a40;border-radius:0px;"></div><div class="t" style="left:734px;top:1855.32px;font-size:24px;line-height:24px;color:#a6a7ab;">Jan 28 12:28:16.900 PM</div><div class="t" style="left:1074px;top:1855.32px;font-size:24px;line-height:24px;color:#d8d9dc;">checkout</div><div class="t" style="left:1393px;top:1855.32px;font-size:24px;line-height:24px;color:#a6a7ab;">Unset</div><div class="t" style="left:1623px;top:1855.32px;font-size:24px;line-height:24px;color:#c1c2c5;">50</div><div class="t" style="left:1944px;top:1855.32px;font-size:24px;line-height:24px;color:#c1c2c5;">oteldemo.CheckoutService/PlaceOrder</div><svg class="r" style="left:672.8px;top:1893.31px;" width="32.1" height="32.1" viewBox="0 0 24 24" fill="none" stroke="#a6a7ab" stroke-width="1.794" stroke-linecap="round" stroke-linejoin="round"><path d="M9 6l6 6l-6 6"/></svg><div class="r" style="left:713px;top:1899.51px;width:2px;height:20px;background:#373a40;border-radius:0px;"></div><div class="t" style="left:734px;top:1900.51px;font-size:24px;line-height:24px;color:#a6a7ab;">Jan 28 12:28:16.900 PM</div><div class="t" style="left:1074px;top:1900.51px;font-size:24px;line-height:24px;color:#d8d9dc;">checkout</div><div class="t" style="left:1393px;top:1900.51px;font-size:24px;line-height:24px;color:#a6a7ab;">Unset</div><div class="t" style="left:1623px;top:1900.51px;font-size:24px;line-height:24px;color:#c1c2c5;">3</div><div class="t" style="left:1944px;top:1900.51px;font-size:24px;line-height:24px;color:#c1c2c5;">oteldemo.CartService/GetCart</div><svg class="r" style="left:672.8px;top:1938.5px;" width="32.1" height="32.1" viewBox="0 0 24 24" fill="none" stroke="#a6a7ab" stroke-width="1.794" stroke-linecap="round" stroke-linejoin="round"><path d="M9 6l6 6l-6 6"/></svg><div class="r" style="left:713px;top:1944.7px;width:2px;height:20px;background:#373a40;border-radius:0px;"></div><div class="t" style="left:734px;top:1945.7px;font-size:24px;line-height:24px;color:#a6a7ab;">Jan 28 12:28:16.900 PM</div><div class="t" style="left:1074px;top:1945.7px;font-size:24px;line-height:24px;color:#d8d9dc;">checkout</div><div class="t" style="left:1393px;top:1945.7px;font-size:24px;line-height:24px;color:#a6a7ab;">Unset</div><div class="t" style="left:1623px;top:1945.7px;font-size:24px;line-height:24px;color:#c1c2c5;">26</div><div class="t" style="left:1944px;top:1945.7px;font-size:24px;line-height:24px;color:#c1c2c5;">prepareOrderItemsAndShippingQuoteFromCart</div><svg class="r" style="left:672.8px;top:1983.69px;" width="32.1" height="32.1" viewBox="0 0 24 24" fill="none" stroke="#a6a7ab" stroke-width="1.794" stroke-linecap="round" stroke-linejoin="round"><path d="M9 6l6 6l-6 6"/></svg><div class="r" style="left:713px;top:1989.89px;width:2px;height:20px;background:#373a40;border-radius:0px;"></div><div class="t" style="left:734px;top:1990.89px;font-size:24px;line-height:24px;color:#a6a7ab;">Jan 28 12:28:16.900 PM</div><div class="t" style="left:1074px;top:1990.89px;font-size:24px;line-height:24px;color:#d8d9dc;">checkout</div><div class="t" style="left:1393px;top:1990.89px;font-size:24px;line-height:24px;color:#a6a7ab;">Unset</div><div class="t" style="left:1623px;top:1990.89px;font-size:24px;line-height:24px;color:#c1c2c5;">53</div><div class="t" style="left:1944px;top:1990.89px;font-size:24px;line-height:24px;color:#c1c2c5;">oteldemo.CheckoutService/PlaceOrder</div><svg class="r" style="left:0;top:1990px" width="46" height="46" viewBox="0 0 46 46"><path d="M0 0 A46 46 0 0 0 46 46 H0 Z" fill="#0b0a07"/></svg><svg class="r" style="left:3567px;top:2004px" width="33" height="32" viewBox="0 0 33 32"><path d="M32 0 A32 32 0 0 1 0 32 H33 V0 Z" fill="#0b0a07"/></svg>
</body></html>
